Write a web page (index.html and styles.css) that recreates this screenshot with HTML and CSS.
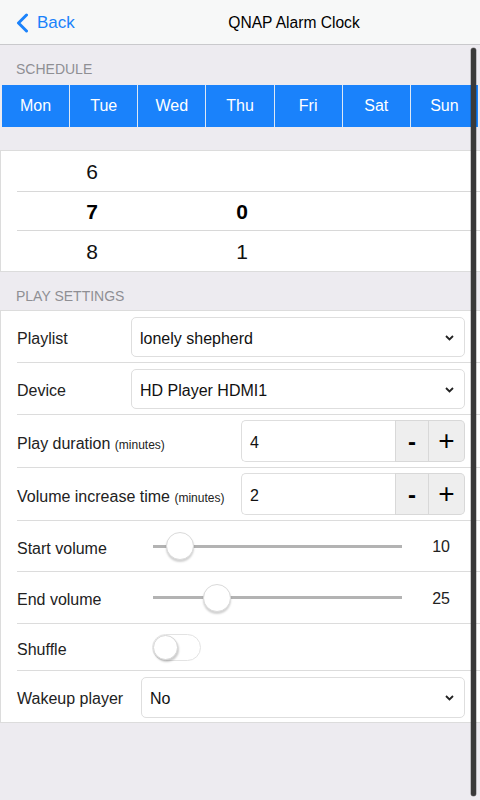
FILE: index.html
```html
<!DOCTYPE html>
<html lang="en">
<head>
<meta charset="utf-8">
<title>QNAP Alarm Clock</title>
<link rel="stylesheet" href="styles.css">
</head>
<body>
<div class="app">
  <header class="navbar">
    <a class="back">
      <svg class="back-icon" width="13" height="20" viewBox="0 0 13 20"><polyline points="10.5,2 2.5,10 10.5,18" fill="none" stroke="#1a82fb" stroke-width="3" stroke-linecap="round" stroke-linejoin="round"/></svg>
      <span>Back</span>
    </a>
    <div class="title">QNAP Alarm Clock</div>
  </header>

  <div class="section-title">SCHEDULE</div>
  <div class="days">
    <div class="day">Mon</div>
    <div class="day">Tue</div>
    <div class="day">Wed</div>
    <div class="day">Thu</div>
    <div class="day">Fri</div>
    <div class="day">Sat</div>
    <div class="day">Sun</div>
  </div>

  <div class="picker">
    <div class="prow first"><span class="pcell">6</span><span class="pcell"></span></div>
    <div class="prow selected"><span class="pcell">7</span><span class="pcell">0</span></div>
    <div class="prow"><span class="pcell">8</span><span class="pcell">1</span></div>
  </div>

  <div class="section-title section-title--play">PLAY SETTINGS</div>
  <div class="list">
    <div class="row">
      <div class="row-inner row-h51">
        <div class="label w114">Playlist</div>
        <div class="select"><span class="select-text">lonely shepherd</span><svg class="chev" width="9" height="6" viewBox="0 0 9 6"><polyline points="1,1 4.5,4.5 8,1" fill="none" stroke="#222" stroke-width="1.8"/></svg></div>
      </div>
    </div>
    <div class="row">
      <div class="row-inner row-h51">
        <div class="label w114">Device</div>
        <div class="select"><span class="select-text">HD Player HDMI1</span><svg class="chev" width="9" height="6" viewBox="0 0 9 6"><polyline points="1,1 4.5,4.5 8,1" fill="none" stroke="#222" stroke-width="1.8"/></svg></div>
      </div>
    </div>
    <div class="row">
      <div class="row-inner row-h52">
        <div class="label w224">Play duration <small>(minutes)</small></div>
        <div class="group">
          <div class="group-input">4</div>
          <div class="group-btn minus">-</div>
          <div class="group-btn plus">+</div>
        </div>
      </div>
    </div>
    <div class="row">
      <div class="row-inner row-h52">
        <div class="label w224">Volume increase time <small>(minutes)</small></div>
        <div class="group">
          <div class="group-input">2</div>
          <div class="group-btn minus">-</div>
          <div class="group-btn plus">+</div>
        </div>
      </div>
    </div>
    <div class="row">
      <div class="row-inner row-h50">
        <div class="label w136">Start volume</div>
        <div class="slider"><div class="track"></div><div class="thumb" style="left: 10.8%"></div></div>
        <div class="value">10</div>
      </div>
    </div>
    <div class="row">
      <div class="row-inner row-h51">
        <div class="label w136">End volume</div>
        <div class="slider"><div class="track"></div><div class="thumb" style="left: 25.6%"></div></div>
        <div class="value">25</div>
      </div>
    </div>
    <div class="row">
      <div class="row-inner row-h46">
        <div class="label w135">Shuffle</div>
        <div class="toggle"><div class="knob"></div></div>
      </div>
    </div>
    <div class="row">
      <div class="row-inner row-h51 last">
        <div class="label w124">Wakeup player</div>
        <div class="select select--tall"><span class="select-text">No</span><svg class="chev" width="9" height="6" viewBox="0 0 9 6"><polyline points="1,1 4.5,4.5 8,1" fill="none" stroke="#222" stroke-width="1.8"/></svg></div>
      </div>
    </div>
  </div>

  <div class="scroll-indicator"></div>
</div>
</body>
</html>
```

FILE: styles.css
```css
* { box-sizing: border-box; }

html, body {
  margin: 0;
  padding: 0;
}

body {
  background: #edebf0;
  font-family: "Liberation Sans", Arial, sans-serif;
  color: #111;
}

.app {
  position: relative;
  width: 480px;
  min-height: 800px;
  background: #edebf0;
  overflow: hidden;
}

/* Navbar */
.navbar {
  display: flex;
  align-items: center;
  height: 45px;
  background: #f7f8f8;
  border-bottom: 1px solid #c9c9cc;
}

.back {
  width: 108px;
  display: flex;
  align-items: center;
  padding-left: 16px;
  padding-top: 2px;
  color: #1a82fb;
  font-size: 17px;
  gap: 8px;
  height: 44px;
}

.back-icon { display: block; margin-top: -1px; }

.title {
  flex: 1;
  text-align: center;
  font-size: 15.6px;
  color: #000;
  padding-top: 2px;
}

/* Section titles */
.section-title {
  padding: 16px 16px 8px;
  font-size: 14px;
  line-height: 16px;
  color: #8f8f94;
}

.section-title--play {
  padding-bottom: 6px;
}

/* Days */
.days {
  display: flex;
  margin: 0 2px;
  background: #1a82fb;
  height: 42px;
}

.day {
  flex: 1;
  color: #fff;
  font-size: 16px;
  line-height: 42px;
  text-align: center;
  border-left: 1px solid #dde8f5;
}

.day:first-child { border-left: none; }

/* Picker */
.picker {
  margin-top: 23px;
  background: #fff;
  border-top: 1px solid #dcdcdc;
  border-bottom: 1px solid #dcdcdc;
  border-left: 1px solid #dcdcdc;
}

.prow {
  margin-left: 16px;
  display: grid;
  grid-template-columns: 150px 150px;
  height: 40px;
  align-items: center;
  border-bottom: 1px solid #d8d8d8;
  font-size: 21px;
  color: #111;
  padding-top: 2px;
}

.prow.first { height: 41px; }

.prow:last-child { border-bottom: none; height: 40px; }

.prow.selected {
  font-weight: bold;
  color: #000;
  height: 39px;
}

.pcell {
  text-align: center;
}

/* Settings list */
.list {
  background: #fff;
  border-top: 1px solid #dcdcdc;
  border-bottom: 1px solid #dcdcdc;
  border-left: 1px solid #dcdcdc;
}

.row {
  padding-left: 16px;
}

.row-inner {
  display: flex;
  align-items: center;
  padding-right: 15px;
  border-bottom: 1px solid #dcdcdc;
}

.row-inner.last { border-bottom: none; }

.row-h51 { height: 52px; }
.row-h52 { height: 53px; }
.row-h50 { height: 51px; }
.row-h46 { height: 47px; }
.row-inner.last { height: 51px; }

.label {
  flex: none;
  font-size: 16px;
  color: #222;
  white-space: nowrap;
  padding-top: 5px;
}

.label small {
  font-size: 12px;
}

.w114 { width: 114px; }
.w124 { width: 124px; }
.w135 { width: 135px; }
.w136 { width: 136px; }
.w224 { width: 224px; }

/* Select */
.select {
  flex: 1;
  height: 40px;
  border: 1px solid #dedede;
  border-radius: 5px;
  display: flex;
  align-items: center;
  justify-content: space-between;
  padding: 0 10px 0 8px;
  font-size: 16px;
  color: #111;
  margin-top: 1px;
}

.select-text { padding-top: 4px; }

.select--tall { height: 41px; }

.chev { display: block; margin-top: 1px; }

/* Input group */
.group {
  flex: 1;
  display: flex;
  height: 42px;
}

.group-input {
  flex: 1;
  border: 1px solid #dedede;
  border-right: none;
  border-radius: 5px 0 0 5px;
  display: flex;
  align-items: center;
  padding-left: 8px;
  padding-top: 4px;
  font-size: 16px;
  color: #111;
}

.group-btn {
  display: flex;
  align-items: center;
  justify-content: center;
  background: #eeeeee;
  border: 1px solid #d8d8d8;
  color: #000;
}

.group-btn.minus {
  width: 34px;
  font-size: 24px;
  font-weight: bold;
  padding-top: 1px;
}

.group-btn.plus {
  width: 36px;
  font-size: 28px;
  border-left: none;
  border-radius: 0 5px 5px 0;
  padding-bottom: 1px;
}

/* Slider */
.slider {
  position: relative;
  width: 250px;
  height: 30px;
  display: flex;
  align-items: center;
}

.track {
  width: 100%;
  height: 3px;
  background: #b3b3b3;
}

.thumb {
  position: absolute;
  top: 1px;
  width: 28px;
  height: 28px;
  margin-left: -14px;
  border-radius: 50%;
  background: #fff;
  border: 1px solid #dadada;
  box-shadow: 0 2px 2px rgba(0, 0, 0, 0.18);
}

.value {
  width: 48px;
  margin-left: 15px;
  text-align: center;
  font-size: 16px;
  color: #222;
  padding-top: 2px;
}

/* Toggle */
.toggle {
  position: relative;
  width: 49px;
  height: 27px;
  border: 1px solid #e3e3e3;
  border-radius: 14px;
  background: #fff;
  margin-top: 1px;
}

.knob {
  position: absolute;
  left: 0;
  top: 0;
  width: 25px;
  height: 25px;
  border-radius: 50%;
  background: #fff;
  border: 1px solid #d6d6d6;
  box-shadow: 1px 2px 2px rgba(0, 0, 0, 0.2);
}

/* Scroll indicator (overlay) */
.scroll-indicator {
  position: absolute;
  left: 471px;
  top: 48px;
  width: 5px;
  height: 748px;
  border-radius: 3px;
  background: #3a3a3a;
  box-shadow: 0 0 0 0.5px rgba(0, 0, 0, 0.4);
}
```
